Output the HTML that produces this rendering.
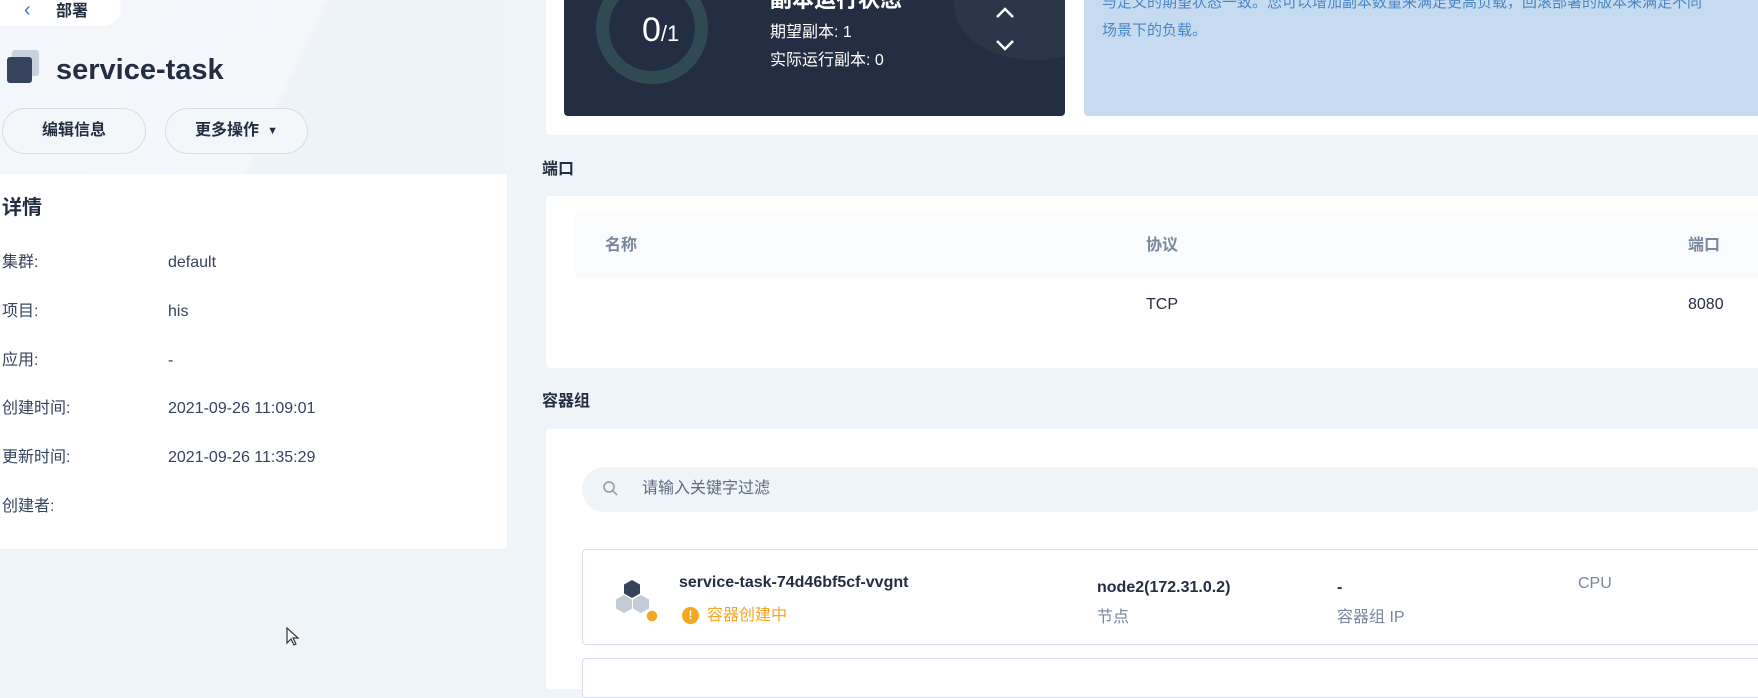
<!DOCTYPE html>
<html><head><meta charset="utf-8"><style>
*{margin:0;padding:0;box-sizing:border-box}
body{width:1758px;height:676px;overflow:hidden;background:#eff4f9;font-family:"Liberation Sans","Noto Sans CJK SC",sans-serif;color:#242e42;position:relative}
.a{position:absolute;white-space:nowrap;line-height:20px}
.bg{left:0;top:0;width:507px;height:174px;background:linear-gradient(115deg,#f3f6fa 0%,#f5f7fb 55%,#eef3f8 56%,#eef3f8 100%)}
.btn{height:46px;border:1px solid #d5dee8;border-radius:23px;background:#f4f7fa;font-size:16px;font-weight:bold;display:flex;align-items:center;justify-content:center}
.lbl{font-size:16px;color:#36435c;left:2px}
.val{font-size:16px;color:#36435c;left:168px}
.card{background:#fff;border-radius:4px}
.sec{font-size:16px;font-weight:bold;color:#242e42}
</style></head><body>
<div class="a bg"></div>
<div class="a" style="left:0;top:-10px;width:121px;height:36px;background:#fff;border-radius:0 18px 18px 0"></div>
<div class="a" style="left:24px;top:0;font-size:20px;color:#3f76c5">&#8249;</div>
<div class="a" style="left:56px;top:2px;font-size:16px;font-weight:bold">部署</div>
<div class="a" style="left:12px;top:50px;width:27px;height:26px;background:#c8d2de;border-radius:3px"></div>
<div class="a" style="left:7px;top:57px;width:25px;height:26px;background:#36435c;border-radius:3px"></div>
<div class="a" style="left:56px;top:54px;font-size:29px;line-height:32px;font-weight:bold">service-task</div>
<div class="a btn" style="left:2px;top:108px;width:144px">编辑信息</div>
<div class="a btn" style="left:165px;top:108px;width:143px">更多操作 <span style="font-size:11px;margin-left:8px">▼</span></div>
<div class="a card" style="left:0;top:174px;width:507px;height:375px;border-radius:0 0 4px 0"></div>
<div class="a" style="left:2px;top:196px;font-size:20px;line-height:24px;font-weight:bold">详情</div>
<div class="a lbl" style="top:253px">集群:</div><div class="a val" style="top:253px">default</div>
<div class="a lbl" style="top:302px">项目:</div><div class="a val" style="top:302px">his</div>
<div class="a lbl" style="top:351px">应用:</div><div class="a val" style="top:351px">-</div>
<div class="a lbl" style="top:399px">创建时间:</div><div class="a val" style="top:399px">2021-09-26 11:09:01</div>
<div class="a lbl" style="top:448px">更新时间:</div><div class="a val" style="top:448px">2021-09-26 11:35:29</div>
<div class="a lbl" style="top:497px">创建者:</div>
<svg class="a" style="left:286px;top:627px" width="14" height="20"><path d="M1 1 L1 16 L5 12 L8 18 L10 17 L7 11 L12 11 Z" fill="#fff" stroke="#333" stroke-width="1.2"/></svg>

<div class="a card" style="left:546px;top:-10px;width:1220px;height:145px"></div>
<div class="a" style="left:564px;top:-10px;width:501px;height:126px;background:#242e42;border-radius:4px;overflow:hidden">
 <div class="a" style="left:390px;top:-40px;width:160px;height:110px;border-radius:50%;background:#2b3649"></div>
 <div class="a" style="left:32px;top:-18px;width:112px;height:112px;border-radius:50%;border:13px solid #2f4a52"></div>
 <div class="a" style="left:78px;top:22px;font-size:34px;line-height:36px;color:#fff">0<span style="font-size:22px">/1</span></div>
 <div class="a" style="left:206px;top:-2px;font-size:22px;line-height:24px;font-weight:bold;color:#fff">副本运行状态</div>
 <div class="a" style="left:206px;top:33px;font-size:16px;color:#fff">期望副本: 1</div>
 <div class="a" style="left:206px;top:61px;font-size:16px;color:#fff">实际运行副本: 0</div>
 <svg class="a" style="left:430px;top:14px" width="22" height="48"><path d="M3 13 L11 5 L19 13 M3 37 L11 45 L19 37" fill="none" stroke="#fff" stroke-width="2.5"/></svg>
</div>
<div class="a" style="left:1084px;top:-10px;width:690px;height:126px;background:#c6dbf0;border-radius:4px"></div>
<div class="a" style="left:1102px;top:-7px;font-size:15px;color:#4a86c5">与定义的期望状态一致。您可以增加副本数量来满足更高负载，回滚部署的版本来满足不同</div>
<div class="a" style="left:1102px;top:21px;font-size:15px;color:#4a86c5">场景下的负载。</div>

<div class="a sec" style="left:542px;top:160px">端口</div>
<div class="a card" style="left:546px;top:196px;width:1220px;height:172px"></div>
<div class="a" style="left:575px;top:213px;width:1190px;height:65px;background:#f9fbfd"></div>
<div class="a" style="left:605px;top:236px;font-size:16px;color:#79879c;font-weight:bold">名称</div>
<div class="a" style="left:1146px;top:236px;font-size:16px;color:#79879c;font-weight:bold">协议</div>
<div class="a" style="left:1688px;top:236px;font-size:16px;color:#79879c;font-weight:bold">端口</div>
<div class="a" style="left:1146px;top:295px;font-size:16px;color:#242e42">TCP</div>
<div class="a" style="left:1688px;top:295px;font-size:16px;color:#242e42">8080</div>

<div class="a sec" style="left:542px;top:392px">容器组</div>
<div class="a card" style="left:546px;top:429px;width:1220px;height:260px"></div>
<div class="a" style="left:582px;top:467px;width:1190px;height:45px;background:#eff4f9;border-radius:23px"></div>
<svg class="a" style="left:602px;top:480px" width="18" height="18"><circle cx="7" cy="7" r="5" fill="none" stroke="#8d99ab" stroke-width="1.5"/><path d="M11 11 L15 15" stroke="#8d99ab" stroke-width="1.5"/></svg>
<div class="a" style="left:642px;top:479px;font-size:16px;color:#5c6b80">请输入关键字过滤</div>
<div class="a" style="left:582px;top:549px;width:1190px;height:96px;background:#fff;border:1px solid #d5dee8;border-radius:4px"></div>
<div class="a" style="left:582px;top:658px;width:1190px;height:40px;background:#fff;border:1px solid #d5dee8;border-radius:4px"></div>
<svg class="a" style="left:610px;top:578px" width="52" height="48">
<polygon points="22,2 30,6.5 30,15.5 22,20 14,15.5 14,6.5" fill="#36435c"/>
<polygon points="14,17 22,21.5 22,30.5 14,35 6,30.5 6,21.5" fill="#c2cbd6"/>
<polygon points="31,17 39,21.5 39,30.5 31,35 23,30.5 23,21.5" fill="#c2cbd6"/>
<circle cx="42" cy="38" r="6" fill="#f5a623" stroke="#fff" stroke-width="1.5"/>
</svg>
<div class="a" style="left:679px;top:573px;font-size:16px;font-weight:bold">service-task-74d46bf5cf-vvgnt</div>
<div class="a" style="left:682px;top:607px;width:17px;height:17px;border-radius:50%;background:#f5a623;color:#fff;font-size:12px;font-weight:bold;text-align:center;line-height:17px">!</div>
<div class="a" style="left:707px;top:606px;font-size:16px;color:#f5a623">容器创建中</div>
<div class="a" style="left:1097px;top:578px;font-size:16px;font-weight:bold">node2(172.31.0.2)</div>
<div class="a" style="left:1097px;top:608px;font-size:16px;color:#79879c">节点</div>
<div class="a" style="left:1337px;top:578px;font-size:16px;font-weight:bold">-</div>
<div class="a" style="left:1337px;top:608px;font-size:16px;color:#79879c">容器组 IP</div>
<div class="a" style="left:1578px;top:574px;font-size:16px;color:#79879c">CPU</div>
</body></html>
